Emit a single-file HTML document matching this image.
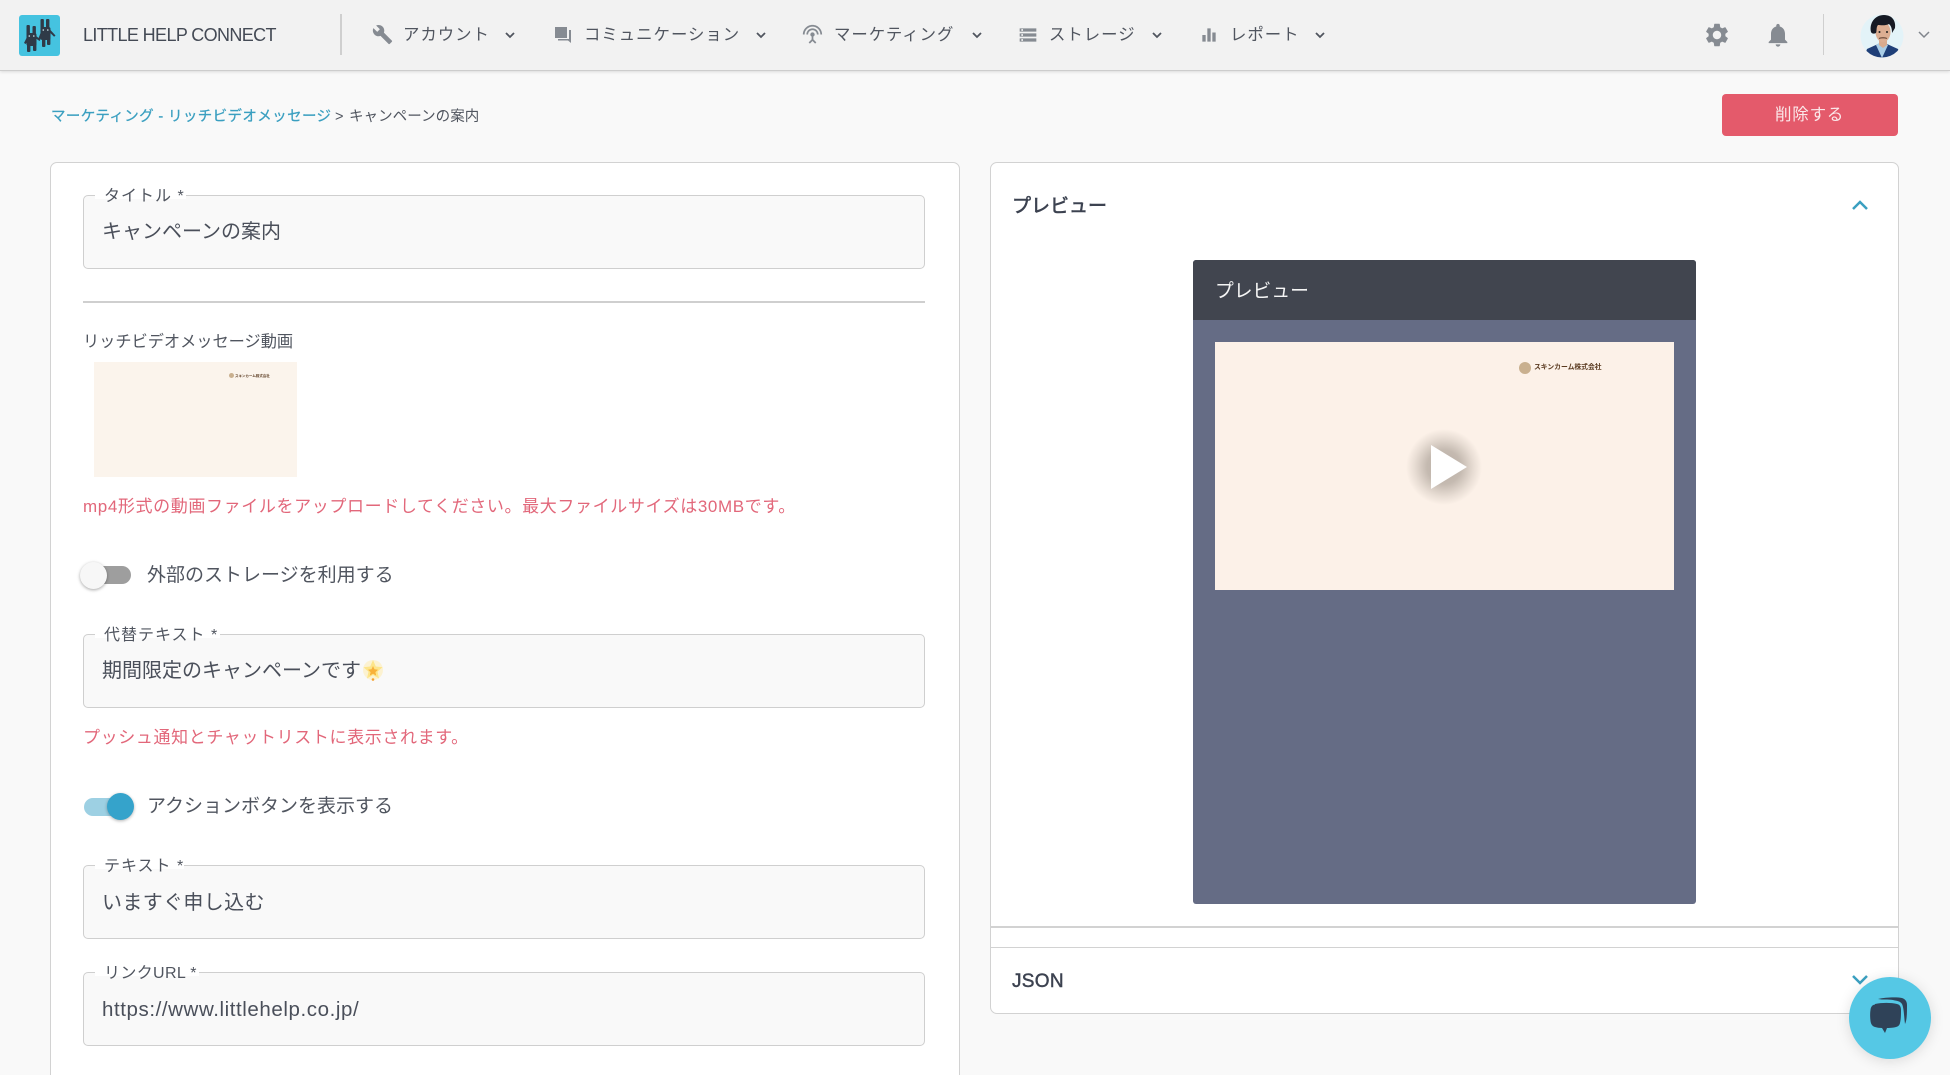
<!DOCTYPE html>
<html lang="ja"><head><meta charset="utf-8"><title>LITTLE HELP CONNECT</title>
<style>
html,body{margin:0;padding:0;width:1950px;height:1075px;overflow:hidden;background:#f9f9f9}
body{position:relative;font-family:"Liberation Sans","Noto Sans CJK JP",sans-serif;color:#4a4f5a}
.t{position:absolute;white-space:nowrap;line-height:30px;height:30px}
.a{position:absolute}
svg{position:absolute;display:block}
.f{position:absolute;left:83px;width:842px;background:#f9f9f9;border:1.5px solid #cfcfcf;border-radius:5px;box-sizing:border-box;height:74px}
.lg{background:#fff;height:6px}
.in{font-size:20px;left:102px;color:#4a4f5a}
.nav{font-size:16.4px;letter-spacing:1px;color:#50555f}
.lb{font-size:16px;letter-spacing:1px;left:104px;color:#50555f}
.red{font-size:17px;letter-spacing:.62px;color:#e2677a;left:83px}
</style></head><body>
<!-- header -->
<div class="a" style="left:0;top:0;width:1950px;height:71px;background:#f2f2f2;border-bottom:1px solid #cdcdcd;box-sizing:border-box;box-shadow:0 1px 3px rgba(0,0,0,.12)"></div>
<svg style="left:19px;top:15px" width="41" height="41" viewBox="0 0 41 41"><rect width="41" height="41" rx="3" fill="#45c3e0"/><g fill="#2f3a48"><rect x="7.500" y="10" width="3.400" height="11" rx="1"/><rect x="13.500" y="11" width="3.400" height="10" rx="1"/><rect x="7.500" y="18" width="10" height="13" rx="2"/><rect x="8" y="29" width="3.400" height="8" rx="1"/><rect x="14" y="28" width="3.400" height="8" rx="1"/><path d="M8.500 21l-3.500 7 1.800 1 3.500-6zM16.500 20.500l5 4-1 1.500-5-3.500z"/><rect x="21.500" y="4" width="3.400" height="11" rx="1"/><rect x="27" y="4" width="3.400" height="11" rx="1"/><rect x="21.500" y="12" width="10" height="13" rx="2"/><rect x="23" y="23" width="3.400" height="9" rx="1"/><rect x="28" y="23" width="3.400" height="7" rx="1"/><path d="M22.500 15.500l-3.500 9 1.800 1 3.500-8zM31 14.500l5.500 6-1.400 1.300-5.300-5.300z"/></g><g fill="#cfe9f0"><circle cx="10.300" cy="21" r=".8"/><circle cx="14.800" cy="21" r=".8"/><circle cx="24.300" cy="15" r=".8"/><circle cx="28.800" cy="15" r=".8"/></g></svg>
<div class="t" style="left:83px;top:20px;font-size:18px;color:#444a55;letter-spacing:-.62px">LITTLE HELP CONNECT</div>
<div class="a" style="left:340px;top:14px;width:1.500px;height:41px;background:#cfcfcf"></div>

<svg style="left:372px;top:24px" width="21" height="21" viewBox="0 0 24 24"><path fill="#868b92" d="M22.700 19l-9.100-9.100c.9-2.300.4-5-1.500-6.900-2-2-5-2.400-7.400-1.300L9 6 6 9 1.600 4.700C.4 7.100.9 10.100 2.900 12.100c1.900 1.900 4.600 2.400 6.900 1.500l9.100 9.100c.4.4 1 .4 1.400 0l2.300-2.300c.5-.4.5-1.100.1-1.400z"/></svg>
<div class="t nav" style="left:403px;top:20px">アカウント</div>
<svg style="left:504px;top:29px" width="12" height="12" viewBox="0 0 12 12"><path d="M2 4l4 4 4-4" fill="none" stroke="#50555f" stroke-width="1.800"/></svg>

<svg style="left:554px;top:26px" width="18" height="18" viewBox="0 0 18 18"><path fill="#868b92" d="M1 1h12v11H1zM15 4h2v13l-3-2.500H4v-1.500h11z"/></svg>
<div class="t nav" style="left:584px;top:20px">コミュニケーション</div>
<svg style="left:755px;top:29px" width="12" height="12" viewBox="0 0 12 12"><path d="M2 4l4 4 4-4" fill="none" stroke="#50555f" stroke-width="1.800"/></svg>

<svg style="left:802px;top:24px" width="21" height="21" viewBox="0 0 24 24"><path fill="#868b92" d="M12 5c-3.870 0-7 3.130-7 7h2c0-2.760 2.240-5 5-5s5 2.240 5 5h2c0-3.870-3.130-7-7-7zm1 9.290c.88-.39 1.500-1.260 1.500-2.290 0-1.380-1.120-2.500-2.500-2.500S9.500 10.620 9.500 12c0 1.020.62 1.900 1.500 2.290v3.300L7.590 21 9 22.410l3-3 3 3L16.410 21 13 17.590v-3.300zM12 1C5.930 1 1 5.930 1 12h2c0-4.970 4.030-9 9-9s9 4.030 9 9h2c0-6.070-4.930-11-11-11z"/></svg>
<div class="t nav" style="left:834px;top:20px">マーケティング</div>
<svg style="left:971px;top:29px" width="12" height="12" viewBox="0 0 12 12"><path d="M2 4l4 4 4-4" fill="none" stroke="#50555f" stroke-width="1.800"/></svg>

<svg style="left:1018px;top:25px" width="20" height="20" viewBox="0 0 24 24"><path fill="#868b92" d="M2 20h20v-4H2v4zm2-3h2v2H4v-2zM2 4v4h20V4H2zm4 3H4V5h2v2zm-4 7h20v-4H2v4zm2-3h2v2H4v-2z"/></svg>
<div class="t nav" style="left:1049px;top:20px">ストレージ</div>
<svg style="left:1151px;top:29px" width="12" height="12" viewBox="0 0 12 12"><path d="M2 4l4 4 4-4" fill="none" stroke="#50555f" stroke-width="1.800"/></svg>

<svg style="left:1199px;top:25px" width="20" height="20" viewBox="0 0 24 24"><path fill="#868b92" d="M10 20h4V4h-4v16zm-6 0h4v-8H4v8zM16 9v11h4V9h-4z"/></svg>
<div class="t nav" style="left:1230px;top:20px">レポート</div>
<svg style="left:1314px;top:29px" width="12" height="12" viewBox="0 0 12 12"><path d="M2 4l4 4 4-4" fill="none" stroke="#50555f" stroke-width="1.800"/></svg>

<svg style="left:1703px;top:21px" width="28" height="28" viewBox="0 0 24 24"><path fill="#868b92" d="M19.140 12.940c.04-.3.06-.61.06-.94 0-.32-.02-.64-.07-.94l2.030-1.580c.18-.14.23-.41.12-.61l-1.920-3.320c-.12-.22-.37-.29-.59-.22l-2.390.96c-.5-.38-1.030-.7-1.620-.94l-.36-2.540c-.04-.24-.24-.41-.48-.41h-3.840c-.24 0-.43.17-.47.41l-.36 2.540c-.59.24-1.130.57-1.620.94l-2.390-.96c-.22-.08-.47 0-.59.22L2.740 8.870c-.12.21-.08.47.12.61l2.030 1.580c-.05.3-.09.63-.09.94s.02.64.07.94l-2.030 1.580c-.18.14-.23.41-.12.61l1.920 3.320c.12.22.37.29.59.22l2.390-.96c.5.38 1.030.7 1.620.94l.36 2.540c.05.24.24.41.48.41h3.840c.24 0 .44-.17.47-.41l.36-2.540c.59-.24 1.130-.56 1.620-.94l2.390.96c.22.08.47 0 .59-.22l1.920-3.320c.12-.22.07-.47-.12-.61l-2.010-1.580zM12 15.600c-1.980 0-3.600-1.620-3.600-3.600s1.620-3.600 3.600-3.600 3.600 1.620 3.600 3.600-1.620 3.600-3.600 3.600z"/></svg>
<svg style="left:1764px;top:21px" width="28" height="28" viewBox="0 0 24 24"><path fill="#868b92" d="M12 22c1.100 0 2-.9 2-2h-4c0 1.100.9 2 2 2zm6-6v-5c0-3.070-1.630-5.640-4.500-6.320V4c0-.83-.67-1.500-1.500-1.500s-1.500.67-1.500 1.500v.68C7.640 5.360 6 7.920 6 11v5l-2 2v1h16v-1l-2-2z"/></svg>
<div class="a" style="left:1822.500px;top:14px;width:1.500px;height:41px;background:#cfcfcf"></div>
<svg style="left:1860px;top:14px" width="44" height="44" viewBox="0 0 44 44"><defs><clipPath id="av"><circle cx="22" cy="22" r="21.500"/></clipPath></defs><g clip-path="url(#av)"><rect width="44" height="44" fill="#e3f3f8"/><path d="M4 44l3-9 11-5h9l11 5 3 9z" fill="#1f3f78"/><path d="M16 31l6 13 6-13-3-2h-6z" fill="#a9cde6"/><path d="M19 22h8v9l-4 3-4-3z" fill="#d9ab8e"/><ellipse cx="23" cy="18" rx="7.500" ry="10" fill="#dcae92"/><path d="M11 18c-2-9 4-17 13-17s12 7 11 13l-3 5c0-5-1-7-3-9-4 2-9 1-11 1-2 2-1 6-2 8-2 1-4 1-5-1z" fill="#161a24"/><path d="M19 24.500c2-1 6-1 8 0" stroke="#6b4a3a" stroke-width="1.200" fill="none"/><circle cx="19.500" cy="18" r="1" fill="#222"/><circle cx="27" cy="18" r="1" fill="#222"/></g></svg>
<svg style="left:1917px;top:29px" width="14" height="12" viewBox="0 0 14 12"><path d="M2 3l5 5 5-5" fill="none" stroke="#80858c" stroke-width="1.500"/></svg>

<!-- breadcrumb -->
<div class="t" style="left:51px;top:102px;font-size:14.500px;letter-spacing:.38px;color:#3a9fc0;-webkit-text-stroke:.25px #3a9fc0">マーケティング - リッチビデオメッセージ</div>
<div class="t" style="left:335px;top:102px;font-size:14.500px;color:#50555f">&gt;</div>
<div class="t" style="left:349px;top:102px;font-size:14.500px;letter-spacing:.06px;color:#50555f">キャンペーンの案内</div>
<div class="a" style="left:1722px;top:94px;width:176px;height:42px;background:#e45a6b;border-radius:4px"></div>
<div class="t" style="left:1775px;top:100px;font-size:16.500px;letter-spacing:.8px;color:#fbe8ea">削除する</div>

<!-- left card -->
<div class="a" style="left:49.500px;top:161.500px;width:910px;height:930px;background:#fff;border:1.500px solid #d2d2d2;border-radius:7px;box-sizing:border-box"></div>

<div class="f" style="top:195px"></div>
<div class="a lg" style="left:95px;top:193px;width:91px"></div>
<div class="t lb" style="top:182px">タイトル *</div>
<div class="t in" style="top:217px">キャンペーンの案内</div>
<div class="a" style="left:83px;top:301px;width:842px;height:1.500px;background:#cfcfcf"></div>
<div class="t" style="left:83px;top:327px;font-size:16.200px;color:#50555f">リッチビデオメッセージ動画</div>
<div class="a" style="left:94px;top:362px;width:203px;height:115px;background:#fbf4ec"></div>
<div class="a" style="left:229px;top:373px;width:5px;height:5px;border-radius:50%;background:#c9b08f"></div>
<div class="t" style="left:235px;top:361px;font-size:3.500px;color:#5a3a20;font-weight:700">スキンカーム株式会社</div>
<div class="t red" style="top:492px">mp4形式の動画ファイルをアップロードしてください。最大ファイルサイズは30MBです。</div>

<div class="a" style="left:86px;top:566px;width:45px;height:18px;border-radius:9px;background:#9e9e9e"></div>
<div class="a" style="left:80px;top:562px;width:27px;height:27px;border-radius:50%;background:#f7f7f7;box-shadow:0 1px 3px rgba(0,0,0,.35)"></div>
<div class="t" style="left:147px;top:561px;font-size:19px;color:#50555f">外部のストレージを利用する</div>

<div class="f" style="top:634px"></div>
<div class="a lg" style="left:95px;top:632px;width:125px"></div>
<div class="t lb" style="top:621px">代替テキスト *</div>
<div class="t in" style="top:656px">期間限定のキャンペーンです</div>
<svg style="left:362px;top:659px" width="22" height="22" viewBox="0 0 22 22"><circle cx="11" cy="11" r="10" fill="#fdf0c0" opacity=".7"/><path d="M11 1l2.800 6.500 6.700.7-5 4.600 1.500 6.700-6-3.500-6 3.500 1.500-6.700-5-4.600 6.700-.7z" fill="#fde58a"/><path d="M11 7l1.500 3.300 3.500.4-2.600 2.400.8 3.500-3.200-1.900-3.200 1.900.8-3.500-2.600-2.400 3.500-.4z" fill="#f8b13a"/><circle cx="11" cy="20.500" r="1.300" fill="#f6a22e"/></svg>
<div class="t red" style="top:723px;left:83px">プッシュ通知とチャットリストに表示されます。</div>

<div class="a" style="left:84px;top:798px;width:46px;height:18px;border-radius:9px;background:#9dd0e3"></div>
<div class="a" style="left:107px;top:793px;width:27px;height:27px;border-radius:50%;background:#35a3cb;box-shadow:0 1px 3px rgba(0,0,0,.3)"></div>
<div class="t" style="left:147px;top:792px;font-size:19px;color:#50555f">アクションボタンを表示する</div>

<div class="f" style="top:865px"></div>
<div class="a lg" style="left:95px;top:863px;width:89px"></div>
<div class="t lb" style="top:852px">テキスト *</div>
<div class="t in" style="top:888px;letter-spacing:.35px">いますぐ申し込む</div>

<div class="f" style="top:972px"></div>
<div class="a lg" style="left:95px;top:970px;width:104px"></div>
<div class="t lb" style="top:959px;letter-spacing:.35px">リンクURL *</div>
<div class="t in" style="top:995px;font-size:20.500px;letter-spacing:.58px">https://www.littlehelp.co.jp/</div>

<!-- right card -->
<div class="a" style="left:989.500px;top:161.500px;width:909.500px;height:852px;background:#fff;border:1.500px solid #d2d2d2;border-radius:7px;box-sizing:border-box"></div>
<div class="t" style="left:1012px;top:192px;font-size:19px;color:#3c4250;-webkit-text-stroke:.6px #3c4250">プレビュー</div>
<svg style="left:1850px;top:197px" width="20" height="16" viewBox="0 0 20 16"><path d="M3 12l7-7 7 7" fill="none" stroke="#3a9fc0" stroke-width="2.500"/></svg>
<div class="a" style="left:1193px;top:260px;width:503px;height:644px;background:#656c85;border-radius:3px;overflow:hidden"><div style="height:60px;background:#41454f"></div></div>
<div class="t" style="left:1215px;top:276px;font-size:18.800px;color:#f5f5f5">プレビュー</div>
<div class="a" style="left:1215px;top:342px;width:459px;height:248px;background:#fcf1e8"></div>
<div class="a" style="left:1406px;top:429px;width:76px;height:76px;border-radius:50%;background:radial-gradient(circle closest-side,rgba(90,80,70,.42) 0%,rgba(90,80,70,.34) 45%,rgba(90,80,70,.12) 78%,rgba(90,80,70,0) 100%)"></div>
<svg style="left:1431px;top:445px" width="36" height="44" viewBox="0 0 36 44"><path d="M0 0L36 22 0 44z" fill="#fff"/></svg>
<div class="a" style="left:1519px;top:362px;width:12px;height:12px;border-radius:50%;background:#c9b08f"></div>
<div class="t" style="left:1534px;top:353px;font-size:6.800px;font-weight:700;color:#5a3a20">スキンカーム株式会社</div>
<div class="a" style="left:990px;top:926px;width:909px;height:1.500px;background:#d2d2d2"></div>
<div class="a" style="left:990px;top:946.500px;width:909px;height:1.500px;background:#d2d2d2"></div>
<div class="t" style="left:1012px;top:967px;font-size:19px;color:#3c4250;-webkit-text-stroke:.45px #3c4250;letter-spacing:.3px">JSON</div>
<svg style="left:1850px;top:972px" width="20" height="16" viewBox="0 0 20 16"><path d="M3 4l7 7 7-7" fill="none" stroke="#3a9fc0" stroke-width="2.500"/></svg>

<!-- chat bubble -->
<div class="a" style="left:1849px;top:977px;width:82px;height:82px;border-radius:50%;background:#55c8e5;box-shadow:0 2px 14px rgba(0,0,0,.13)"></div>
<svg style="left:1868px;top:996px" width="44" height="44" viewBox="0 0 44 44"><path d="M10 3C18 1 30 1 34 2c3 1 5 3 5 7 0 8 0 15-2 19-1-7-1-16-3-20-2-3-5-3-9-4-5-1-10 0-15-1z" fill="#2f4258"/><path d="M7 8c7-1.500 16-1.500 22 0 3 .7 4 3 4 6 0 5 0 9-1 13-.5 3-3 4-6 4.500-3 .3-5 .5-7 .5l-2 5-3-5c-3 0-5-.5-7-1-3-1-4-3-4.500-6-.5-4-.5-8 0-11 .3-3 1.500-5 4.500-5.500z" fill="#2f4258"/></svg>
</body></html>
